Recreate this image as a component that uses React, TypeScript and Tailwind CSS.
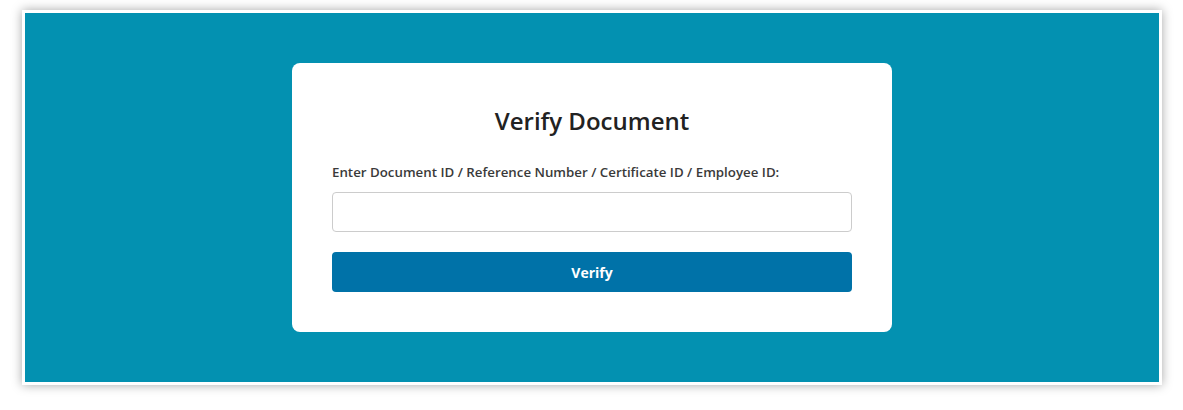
export default function App() {
  return (
    <div className="w-[1183px] h-[410px] bg-white pt-[10px] pl-[22px]" style={{ fontFamily: '"Open Sans", "Noto Sans", sans-serif' }}>
      <div className="w-[1140px] h-[375px] border-[3px] border-white bg-[#0391b1] shadow-[0_0_10px_rgba(0,0,0,0.35)] flex items-center justify-center">
        <div className="w-[600px] bg-white rounded-lg p-10">
          <h1 className="text-center text-[24px] leading-[36px] font-semibold text-[#222]">Verify Document</h1>
          <label htmlFor="doc-id" className="block mt-[23px] mb-2.5 text-[13.3px] leading-5 font-semibold text-[#3a3a3a]">
            Enter Document ID / Reference Number / Certificate ID / Employee ID:
          </label>
          <input
            id="doc-id"
            type="text"
            className="block w-full h-10 px-3 rounded border border-[#ccc] text-[14px] focus:outline-none"
          />
          <button type="button" className="mt-5 w-full h-10 rounded bg-[#0072a8] text-white text-[14px] font-bold">
            Verify
          </button>
        </div>
      </div>
    </div>
  )
}
